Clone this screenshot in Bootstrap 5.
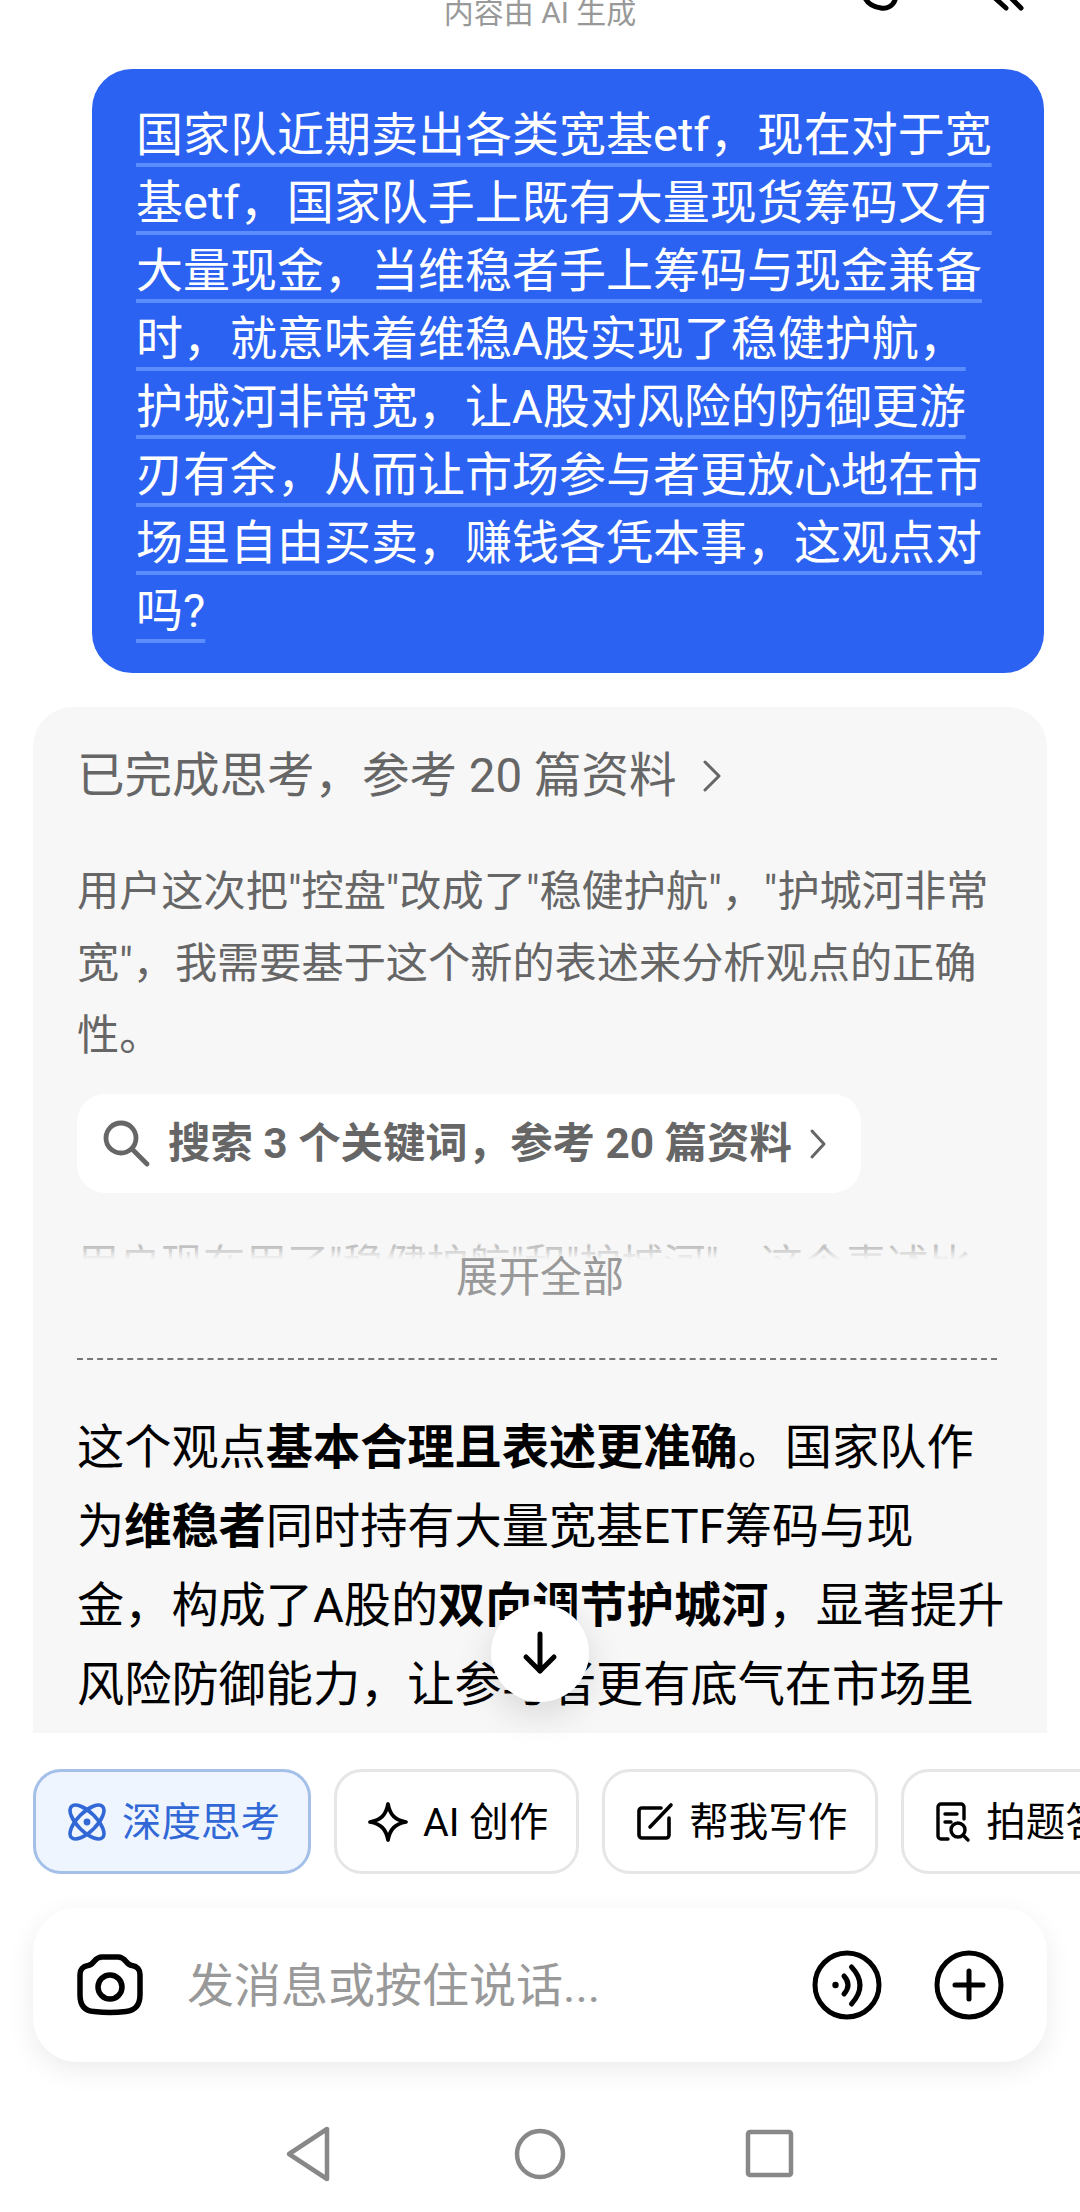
<!doctype html>
<html lang="zh">
<head>
<meta charset="utf-8">
<title>对话</title>
<link href="https://cdn.jsdelivr.net/npm/bootstrap@5.3.0/dist/css/bootstrap.min.css" rel="stylesheet">
<style>
  html, body { margin: 0; height: 2212px; overflow: hidden; background: #fff; }
  body { font-family: Roboto, "Noto Sans CJK SC", sans-serif; color: #000; }
  .screen { width: 1080px; height: 2212px; position: relative; overflow: hidden; }

  /* top of the conversation */
  .notice { height: 69px; position: relative; overflow: hidden; }
  .notice-text { font-size: 30px; line-height: 40px; color: #999; position: relative; top: -7px; }
  .clip-icons { position: absolute; top: 0; left: 860px; }

  /* user's message */
  .bubble-wrap { padding-left: 92px; padding-right: 36px; }
  .bubble { background: #2b62f2; color: #fff; border-radius: 40px; padding: 32px 40px 28px 44px;
            font-size: 47px; line-height: 68px; white-space: nowrap; }
  .bubble-text { text-decoration: underline; text-decoration-color: #5b8dff; text-decoration-thickness: 4px;
                 text-underline-offset: 12px; text-decoration-skip-ink: none; }

  /* reply card */
  .reply { margin: 34px 33px 0; background: #f7f7f7; height: 1026px; border-radius: 40px 40px 0 0;
           padding: 0 44px; overflow: hidden; position: relative; }
  .think-head { font-size: 47.5px; line-height: 60px; color: #666; padding-top: 39px; gap: 26px; }
  .think-body { font-size: 42.2px; line-height: 72px; color: #666; margin-top: 50px; white-space: nowrap; }
  .source-pill { background: #fff; border-radius: 28px; width: 784px; height: 99px; margin-top: 22px;
                 padding-left: 26px; font-size: 42.4px; font-weight: 700; color: #666; gap: 17px; white-space: nowrap; }
  .pill-arrow { margin-left: 0; }
  .fold-area { height: 165px; position: relative; overflow: hidden; }
  .fold-line { font-size: 42px; line-height: 72px; color: #666; white-space: nowrap; position: absolute; top: 36px; left: 0; }
  .fold-cover { position: absolute; inset: 0;
                background: linear-gradient(to bottom, #f7f7f7 50px, rgba(247,247,247,.6) 53px, rgba(247,247,247,.88) 62px, #f7f7f7 67px); }
  .fold-label { position: absolute; left: 0; right: 0; top: 59px; text-align: center; font-size: 42px; line-height: 52px; color: #999; }
  .dash-rule { border-top: 2px dashed #777; width: 920px; margin: 0; opacity: 1; }
  .answer { font-size: 47.2px; line-height: 79px; color: #000; margin-top: 49px; white-space: nowrap; }

  /* jump-to-latest button */
  .jump { position: absolute; left: 491px; top: 1604px; width: 98px; height: 98px; border-radius: 50%;
          background: #fff; box-shadow: 0 12px 36px rgba(0,0,0,.13); }

  /* quick action chips */
  .chips { position: absolute; top: 1769px; left: 33px; gap: 23px; white-space: nowrap; }
  .chip { height: 105px; border: 3px solid #e6e6e6; border-radius: 28px; background: #fff; font-size: 39.5px;
          gap: 14px; padding: 3px 28px 0 30px; flex: none; color: #000; }
  .chip svg { margin-top: -3px; }
  .chip-on { background: #eef5ff; border-color: #a4c0e8; color: #3168d6; }

  /* message box */
  .composer { position: absolute; left: 33px; top: 1908px; width: 1014px; height: 154px; border-radius: 44px;
              background: #fff; box-shadow: 0 8px 28px rgba(0,0,0,.08); padding: 0 43px 0 44px; gap: 52px; }
  .composer-hint { font-size: 47px; color: #999; margin-left: -8px; padding-top: 2px; }

  /* system navigation */
  .sysnav { position: absolute; left: 0; top: 2125px; width: 1080px; height: 60px; }
</style>
</head>
<body>
<div class="screen">
  <div class="notice text-center">
    <div class="notice-text">内容由 AI 生成</div>
    <svg class="clip-icons" width="180" height="12" viewBox="0 0 180 12" fill="none" stroke="#000" stroke-width="5" stroke-linecap="round">
      <path d="M5-2c3 6 9 9 16 10 6 1 12-2 14-8"/>
      <path d="M136-1l10 9M152-1l9 9"/>
    </svg>
  </div>

  <div class="bubble-wrap">
    <div class="bubble"><span class="bubble-text">国家队近期卖出各类宽基etf，现在对于宽</span><br><span class="bubble-text">基etf，国家队手上既有大量现货筹码又有</span><br><span class="bubble-text">大量现金，当维稳者手上筹码与现金兼备</span><br><span class="bubble-text">时，就意味着维稳A股实现了稳健护航，</span><br><span class="bubble-text">护城河非常宽，让A股对风险的防御更游</span><br><span class="bubble-text">刃有余，从而让市场参与者更放心地在市</span><br><span class="bubble-text">场里自由买卖，赚钱各凭本事，这观点对</span><br><span class="bubble-text">吗?</span></div>
  </div>

  <div class="reply">
    <div class="think-head d-flex align-items-center">
      <span>已完成思考，参考 20 篇资料</span>
      <svg width="20" height="34" viewBox="0 0 20 34" fill="none" stroke="#666" stroke-width="3" stroke-linecap="round" stroke-linejoin="round"><path d="M3 3l14 14L3 31"/></svg>
    </div>
    <div class="think-body">用户这次把"控盘"改成了"稳健护航"，"护城河非常<br>宽"，我需要基于这个新的表述来分析观点的正确<br>性。</div>
    <div class="source-pill d-flex align-items-center">
      <svg width="48" height="48" viewBox="0 0 48 48" fill="none" stroke="#666" stroke-width="4.8" stroke-linecap="round"><circle cx="18" cy="18" r="15"/><path d="M30 30l14 14"/></svg>
      <span>搜索 3 个关键词，参考 20 篇资料</span>
      <svg class="pill-arrow" width="18" height="32" viewBox="0 0 18 32" fill="none" stroke="#666" stroke-width="3" stroke-linecap="round" stroke-linejoin="round"><path d="M3 3l12 13L3 29"/></svg>
    </div>
    <div class="fold-area">
      <div class="fold-line">用户现在用了"稳健护航"和"护城河"，这个表述比</div>
      <div class="fold-cover"></div>
      <div class="fold-label">展开全部</div>
    </div>
    <hr class="dash-rule">
    <div class="answer">这个观点<b>基本合理且表述更准确</b>。国家队作<br>为<b>维稳者</b>同时持有大量宽基ETF筹码与现<br>金，构成了A股的<b>双向调节护城河</b>，显著提升<br>风险防御能力，让参与者更有底气在市场里</div>
  </div>

  <div class="jump d-flex align-items-center justify-content-center">
    <svg width="36" height="44" viewBox="0 0 36 44" fill="none" stroke="#000" stroke-width="5" stroke-linecap="round" stroke-linejoin="round"><path d="M18 3v37M4 26l14 14 14-14"/></svg>
  </div>

  <div class="chips d-flex">
    <div class="chip chip-on d-flex align-items-center">
      <svg width="42" height="42" viewBox="0 0 42 42" fill="none" stroke="#3168d6" stroke-width="3.6"><ellipse cx="21" cy="21" rx="9.5" ry="22" transform="rotate(45 21 21)"/><ellipse cx="21" cy="21" rx="9.5" ry="22" transform="rotate(-45 21 21)"/><circle cx="21" cy="21" r="3.4" fill="#3168d6" stroke="none"/></svg>
      <span>深度思考</span>
    </div>
    <div class="chip d-flex align-items-center">
      <svg width="42" height="42" viewBox="0 0 42 42" fill="none" stroke="#000" stroke-width="3.8" stroke-linejoin="round"><path d="M21 3c2 11 7 16 18 18-11 2-16 7-18 18-2-11-7-16-18-18 11-2 16-7 18-18z"/></svg>
      <span>AI 创作</span>
    </div>
    <div class="chip d-flex align-items-center">
      <svg width="40" height="40" viewBox="0 0 40 40" fill="none" stroke="#000" stroke-width="3.6" stroke-linecap="round" stroke-linejoin="round"><path d="M26 6H7a3 3 0 0 0-3 3v24a3 3 0 0 0 3 3h24a3 3 0 0 0 3-3V16"/><path d="M15 25L36 3"/></svg>
      <span>帮我写作</span>
    </div>
    <div class="chip d-flex align-items-center">
      <svg width="38" height="42" viewBox="0 0 38 42" fill="none" stroke="#000" stroke-width="3.4" stroke-linecap="round" stroke-linejoin="round"><path d="M14 38H7a3 3 0 0 1-3-3V6a3 3 0 0 1 3-3h20a3 3 0 0 1 3 3v12"/><path d="M11 13h12M11 21h6"/><circle cx="24" cy="29" r="7"/><path d="M29 34l5 5"/></svg>
      <span>拍题答疑</span>
    </div>
  </div>

  <div class="composer d-flex align-items-center">
    <svg width="66" height="62" viewBox="0 0 66 62" fill="none" stroke="#000" stroke-width="5.5" stroke-linejoin="round"><path d="M25 3h16c4 0 6 2 8 4.500 2 2.500 3 3.500 6 4 5 .7 8 4 8 9v20c0 12-6 16-14 17-6 .7-12 1-16 1s-10-.3-16-1C9 57 3 53 3 41V20.500c0-5 3-8.300 8-9 3-.5 4-1.500 6-4C19 5 21 3 25 3z"/><circle cx="33" cy="33" r="12"/></svg>
    <span class="composer-hint flex-grow-1">发消息或按住说话...</span>
    <svg width="70" height="70" viewBox="0 0 70 70" fill="none" stroke="#000" stroke-width="5" stroke-linecap="round"><circle cx="35" cy="35" r="32"/><circle cx="23.500" cy="35" r="3.200" fill="#000" stroke="none"/><path d="M32 26q8 9 0 18"/><path d="M39.500 17q17 18 0 37" stroke-width="5"/></svg>
    <svg width="70" height="70" viewBox="0 0 70 70" fill="none" stroke="#000" stroke-width="5" stroke-linecap="round"><circle cx="35" cy="35" r="32"/><path d="M35 21v28M21 35h28"/></svg>
  </div>

  <div class="sysnav">
    <svg width="1080" height="60" viewBox="0 0 1080 60" fill="none" stroke="#888" stroke-width="4.5" stroke-linejoin="round" stroke-linecap="round">
      <path d="M327 4v50L289 29z"/>
      <circle cx="540" cy="29" r="23"/>
      <rect x="748" y="7" width="43" height="43" rx="2"/>
    </svg>
  </div>
</div>
<script src="https://cdn.jsdelivr.net/npm/bootstrap@5.3.0/dist/js/bootstrap.bundle.min.js"></script>
</body>
</html>
